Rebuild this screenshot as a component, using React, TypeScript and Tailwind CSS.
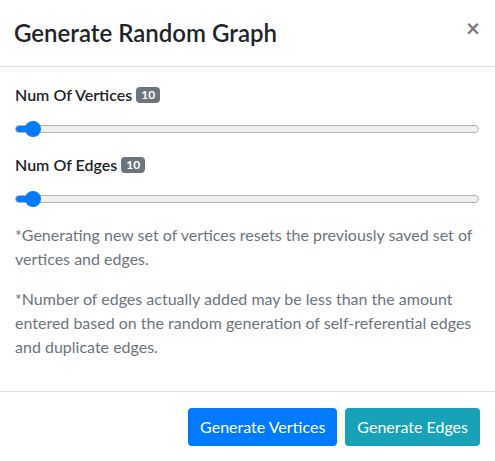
import { useState } from "react";

const MAX = 500;

const RangeRow = ({ label, value, onChange }: { label: string; value: number; onChange: (v: number) => void }) => {
  const frac = value / MAX;
  return (
    <div className="mb-4">
      <div className="flex items-center gap-1 text-[16px] font-semibold leading-6 text-[#212529]">
        <span>{label}</span>
        <span className="inline-block rounded-[4px] bg-[#6c757d] px-[5px] py-[2px] text-[12px] font-bold leading-none text-white">
          {value}
        </span>
      </div>
      <div className="mt-[14px] flex h-4 items-center">
        <input
          type="range"
          min={0}
          max={MAX}
          value={value}
          onChange={(e) => onChange(Number(e.target.value))}
          style={{ background: `linear-gradient(to right, #007bff calc(8px + ${frac} * (100% - 16px)), #efefef 0)` }}
          className="block h-2 w-full appearance-none rounded-full border border-[#b2b2b2] outline-none [&::-webkit-slider-thumb]:h-4 [&::-webkit-slider-thumb]:w-4 [&::-webkit-slider-thumb]:appearance-none [&::-webkit-slider-thumb]:rounded-full [&::-webkit-slider-thumb]:bg-[#007bff]"
        />
      </div>
    </div>
  );
};

const App = () => {
  const [vertices, setVertices] = useState(10);
  const [edges, setEdges] = useState(10);

  return (
    <div className="w-[495px] h-[461px] bg-white font-['Lato','Liberation_Sans',sans-serif]">
      <div className="flex items-start justify-between border-b border-[#dee2e6] pl-[14px] pr-4 pt-[18px] pb-[17px] h-[67px]">
        <h4 className="text-[24px] font-semibold leading-[30px] text-[#212529]">Generate Random Graph</h4>
        <button className="mr-[-1px] mt-[-2px] text-[24px] font-bold leading-none text-[#7a7a7a]">×</button>
      </div>

      <div className="pl-[15px] pr-4 pt-4 pb-4">
        <RangeRow label="Num Of Vertices" value={vertices} onChange={setVertices} />
        <RangeRow label="Num Of Edges" value={edges} onChange={setEdges} />
        <p className="mt-4 mb-4 text-[16px] leading-6 text-[#6c757d]">
          *Generating new set of vertices resets the previously saved set of vertices and edges.
        </p>
        <p className="mb-4 text-[16px] leading-6 text-[#6c757d]">
          *Number of edges actually added may be less than the amount entered based on the random generation of self-referential edges and duplicate edges.
        </p>
      </div>

      <div className="flex justify-end gap-2 border-t border-[#dee2e6] px-[15px] pt-4">
        <button className="h-[38px] rounded-[4px] bg-[#007bff] px-3 text-[16px] leading-6 text-white">Generate Vertices</button>
        <button className="h-[38px] rounded-[4px] bg-[#17a2b8] px-3 text-[16px] leading-6 text-white">Generate Edges</button>
      </div>
    </div>
  );
};

export default App;
